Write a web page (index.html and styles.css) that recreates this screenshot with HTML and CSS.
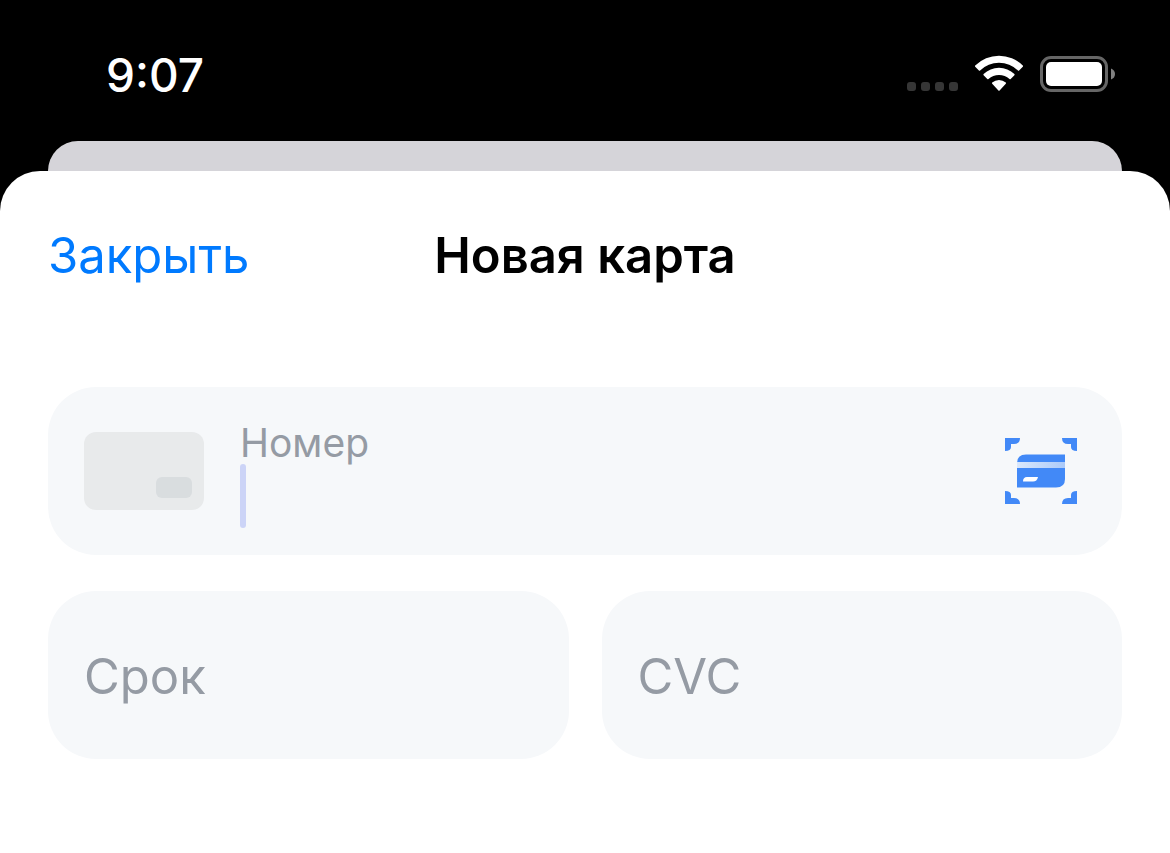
FILE: index.html
```html
<!DOCTYPE html>
<html lang="ru">
<head>
<meta charset="utf-8">
<meta name="viewport" content="width=device-width, initial-scale=1">
<title>Новая карта</title>
<link rel="stylesheet" href="styles.css">
</head>
<body>
<header class="status">
  <time class="clock">9:07</time>
  <div class="indicators">
    <svg width="51" height="36" viewBox="0 0 51 36" aria-hidden="true">
      <g fill="#363636">
        <rect x="0" y="26" width="9" height="9" rx="3"/><rect x="14" y="26" width="9" height="9" rx="3"/>
        <rect x="28" y="26" width="9" height="9" rx="3"/><rect x="42" y="26" width="9" height="9" rx="3"/>
      </g>
    </svg>
    <svg width="50" height="37" viewBox="0 -1 50 37" aria-hidden="true">
      <g fill="#fff">
        <path d="M1.200 9.600a33.500 33.500 0 0 1 47.600 0q.5.6 0 1.200l-3.700 3.700q-.6.500-1.200 0a27 27 0 0 0-37.800 0q-.6.500-1.200 0L1.200 10.800q-.5-.6 0-1.200z"/>
        <path d="M9.600 18.100a22 22 0 0 1 30.800 0q.5.6 0 1.200l-3.700 3.700q-.6.500-1.200 0a15.500 15.500 0 0 0-21 0q-.6.500-1.200 0l-3.700-3.700q-.5-.6 0-1.200z"/>
        <path d="M18.200 26.500a10.500 10.500 0 0 1 13.600 0q.6.6 0 1.200l-6.200 6.800q-.6.600-1.200 0l-6.200-6.800q-.6-.6 0-1.200z"/>
      </g>
    </svg>
    <svg width="76" height="36" viewBox="0 0 76 36" aria-hidden="true">
      <rect x="1.500" y="1.500" width="65" height="33" rx="9.500" fill="none" stroke="#666" stroke-width="3"/>
      <rect x="6" y="6" width="56" height="24" rx="5" fill="#fff"/>
      <path d="M71 12.500q4 1.500 4 5.500t-4 5.500z" fill="#808080"/>
    </svg>
  </div>
</header>
<div class="back-sheet"></div>
<main class="sheet">
  <nav class="nav">
    <button class="close" type="button">Закрыть</button>
    <h1 class="title">Новая карта</h1>
  </nav>
  <form class="form">
    <div class="field number">
      <svg class="card" width="120" height="78" viewBox="0 0 120 78" aria-hidden="true">
        <rect width="120" height="78" rx="12" fill="#e8eaeb"/>
        <rect x="72" y="45" width="36" height="21" rx="6" fill="#d9dddf"/>
      </svg>
      <div class="entry">
        <label class="label" for="number">Номер</label>
        <div class="line">
          <span class="caret"></span>
          <input class="input" id="number" type="text" inputmode="numeric">
        </div>
      </div>
      <button class="scan" type="button" aria-label="Сканировать карту">
        <svg width="72" height="66" viewBox="0 0 72 66" aria-hidden="true">
          <defs>
            <linearGradient id="stripe"><stop offset="0" stop-color="#dbe8fb"/><stop offset="1" stop-color="#abcaf9"/></linearGradient>
          </defs>
          <g fill="#4289f7">
            <path d="M0 0h15q0 6-6 6H6v3q0 4-6 4z"/>
            <path d="M72 0H57q0 6 6 6h3v3q0 4 6 4z"/>
            <path d="M0 66h15q0-6-6-6H6v-3q0-4-6-4z"/>
            <path d="M72 66H57q0-6 6-6h3v-3q0-4 6-4z"/>
            <path d="M21 16.500h39V41q0 8.500-9 8.500H12V25q0-8.500 9-8.500z"/>
          </g>
          <path d="M12 24h48v6H12z" fill="url(#stripe)"/>
          <path d="M22 39h11q-1 4.500-5 4.500H18q0-4.500 4-4.500z" fill="#fff"/>
        </svg>
      </button>
    </div>
    <div class="pair">
      <div class="field short"><input class="input" type="text" aria-label="Срок" placeholder="Срок"></div>
      <div class="field short"><input class="input" type="text" aria-label="CVC" placeholder="CVC"></div>
    </div>
  </form>
</main>
</body>
</html>
```
FILE: styles.css
```css
* { box-sizing: border-box; }

body {
  margin: 0;
  min-height: 100vh;
  display: flex;
  flex-direction: column;
  background: #000;
  font-family: Inter, "Liberation Sans", sans-serif;
}

button {
  padding: 0;
  border: 0;
  background: none;
  font: inherit;
  cursor: pointer;
}

svg { display: block; }

.status {
  display: flex;
  justify-content: space-between;
  align-items: flex-start;
  height: 141px;
  padding: 55px 54px 0 106px;
}

.clock {
  color: #fff;
  font-size: 46px;
  line-height: 40px;
  font-weight: 500;
}

.indicators {
  display: flex;
  align-items: flex-end;
  gap: 16px;
}

.back-sheet {
  height: 30px;
  margin: 0 48px;
  border-radius: 30px 30px 0 0;
  background: #d5d4d9;
}

.sheet {
  flex: 1;
  padding: 0 48px 48px;
  border-radius: 40px 40px 0 0;
  background: #fff;
}

.nav {
  display: grid;
  grid-template-columns: 1fr auto 1fr;
  align-items: center;
  height: 170px;
}

.close {
  justify-self: start;
  color: #007aff;
  font-size: 49px;
  line-height: 60px;
}

.title {
  margin: 0;
  color: #000;
  font-size: 49px;
  line-height: 60px;
  font-weight: 600;
}

.form {
  display: grid;
  gap: 36px;
  padding-top: 46px;
}

.pair {
  display: grid;
  grid-template-columns: 1fr 1fr;
  gap: 33px;
}

.field {
  display: flex;
  align-items: center;
  min-width: 0;
  height: 168px;
  padding: 0 36px;
  border-radius: 48px;
  background: #f6f8fa;
}

.number { gap: 36px; padding-right: 45px; }

.short { padding-top: 4px; }

.card, .scan { flex: none; }

.entry { flex: 1; min-width: 0; }

.label {
  display: block;
  padding-top: 8px;
  color: #959ba4;
  font-size: 39px;
  line-height: 42px;
}

.line { display: flex; }

.caret {
  flex: none;
  width: 6px;
  height: 64px;
  border-radius: 3px;
  background: #ccd4f7;
}

.input {
  flex: 1;
  width: 100%;
  height: 64px;
  min-width: 0;
  padding: 0;
  border: 0;
  outline: 0;
  background: transparent;
  color: #000;
  font: inherit;
  font-size: 49px;
  line-height: 64px;
}

.input::placeholder { color: #959ba4; opacity: 1; }
```
